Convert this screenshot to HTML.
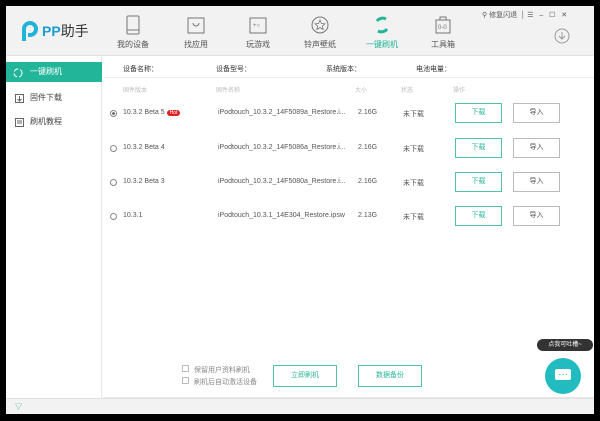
<!DOCTYPE html><html><head><meta charset="utf-8"><style>
*{margin:0;padding:0;box-sizing:border-box}
body{width:600px;height:421px;background:#000;font-family:"Liberation Sans","Noto Sans CJK SC",sans-serif;position:relative;overflow:hidden;font-size:8px;color:#444}
.win{position:absolute;left:6px;top:6px;width:588px;height:408px;background:#fff}
.hd{position:absolute;left:0;top:0;width:588px;height:50px;background:#f2f2f2;border-bottom:1px solid #e2e2e2}
.a{position:absolute;white-space:nowrap}
.nav{position:absolute;top:9px;width:50px;text-align:center;font-size:8px;color:#555}
.nav svg{display:block;margin:0 auto 4px}
.side{position:absolute;left:0;top:50px;width:96px;height:342px;border-right:1px solid #e6e6e6}
.si{position:absolute;left:0;width:96px;height:20px;line-height:20px;padding-left:24px;font-size:8px;color:#444}
.btn{position:absolute;width:47px;height:20px;border:1px solid #bbb;text-align:center;line-height:18px;font-size:7px;color:#555;background:#fff}
.g{border-color:#4cc4ad;color:#2ab59b}
.row{position:absolute;left:0;font-size:7px;color:#555}
.rad{position:absolute;width:7px;height:7px;border:1px solid #888;border-radius:50%}
</style></head><body><div class="win">
<div class="hd">
 <svg class="a" style="left:14px;top:14px" width="20" height="22" viewBox="0 0 20 22"><path d="M4 21V9a6 6 0 1 1 6 6H8" fill="none" stroke="#1fb4d8" stroke-width="4"/></svg>
 <div class="a" style="left:36px;top:15px;font-size:14px;color:#1a9fd0;font-weight:bold">PP<span style="color:#333;font-weight:normal">助手</span></div>
 <div class="nav" style="left:102px"><svg width="14" height="20"><rect x="1" y="1" width="12" height="18" rx="1" fill="none" stroke="#777"/><line x1="1" y1="15" x2="13" y2="15" stroke="#777"/></svg>我的设备</div>
 <div class="nav" style="left:165px"><svg width="18" height="20"><rect x="1" y="3" width="16" height="15" fill="none" stroke="#777"/><path d="M6 8a3 3 0 0 0 6 0" fill="none" stroke="#777"/></svg>找应用</div>
 <div class="nav" style="left:227px"><svg width="18" height="20"><rect x="1" y="3" width="16" height="15" fill="none" stroke="#777"/><text x="4" y="12" font-size="6" fill="#777">+○</text></svg>玩游戏</div>
 <div class="nav" style="left:289px"><svg width="18" height="20"><circle cx="9" cy="10" r="8" fill="none" stroke="#777"/><path d="M9 5l1.5 3.5 3.5.3-2.7 2.3.9 3.4L9 12.6 5.8 14.5l.9-3.4L4 8.8l3.5-.3z" fill="none" stroke="#777" stroke-width=".8"/></svg>铃声壁纸</div>
 <div class="nav" style="left:351px;color:#22b59a"><svg width="18" height="20"><path d="M4 6a7 7 0 0 1 9-2M14 14a7 7 0 0 1-9 2" fill="none" stroke="#22b59a" stroke-width="3"/></svg>一键刷机</div>
 <div class="nav" style="left:412px"><svg width="18" height="20"><rect x="2" y="5" width="14" height="13" fill="none" stroke="#777"/><rect x="6" y="2" width="6" height="3" fill="none" stroke="#777"/><text x="4" y="14" font-size="6" fill="#777">0-0</text></svg>工具箱</div>
 <div class="a" style="left:476px;top:4px;font-size:7px;color:#555">⚲ 修复闪退 &nbsp;│ ☰ &nbsp; – &nbsp; ☐ &nbsp; ✕</div>
 <svg class="a" style="left:548px;top:22px" width="16" height="16"><circle cx="8" cy="8" r="7" fill="none" stroke="#999"/><path d="M8 4v7M5 8l3 3 3-3" fill="none" stroke="#999"/></svg>
</div>
<div class="side">
 <div class="si" style="top:6px;background:#22b59a;color:#fff">一键刷机</div>
 <svg class="a" style="left:7px;top:12px" width="10" height="10"><circle cx="5" cy="5" r="4" fill="none" stroke="#fff" stroke-dasharray="5 2"/></svg>
 <div class="si" style="top:32px">固件下载</div>
 <svg class="a" style="left:9px;top:38px" width="9" height="9"><rect x=".5" y=".5" width="8" height="8" fill="none" stroke="#666"/><path d="M4.5 2v5M2.5 5l2 2 2-2" fill="none" stroke="#666"/></svg>
 <div class="si" style="top:56px">刷机教程</div>
 <svg class="a" style="left:9px;top:62px" width="9" height="9"><rect x=".5" y=".5" width="8" height="8" fill="none" stroke="#666"/><path d="M2 3h5M2 5h5" stroke="#666"/></svg>
</div>
<div class="a" style="left:97px;top:50px;width:491px;height:22px;border-bottom:1px solid #eee;font-size:7px;color:#333">
 <span class="a" style="left:20px;top:8px">设备名称：</span><span class="a" style="left:113px;top:8px">设备型号：</span><span class="a" style="left:223px;top:8px">系统版本：</span><span class="a" style="left:313px;top:8px">电池电量：</span></div>
<div class="a" style="left:97px;top:79px;width:491px;font-size:6px;color:#bbb">
 <span class="a" style="left:20px">固件版本</span><span class="a" style="left:113px">固件名称</span><span class="a" style="left:252px">大小</span><span class="a" style="left:298px">状态</span><span class="a" style="left:350px">操作</span></div>
<div class="a" style="left:97px;top:347px;width:491px;height:45px;border-bottom:1px solid #e6e6e6"></div>
<div class="row" style="top:104px">
 <span class="rad a" style="left:104px;top:0;background:radial-gradient(#666 35%,#fff 45%)"></span>
 <span class="a" style="left:117px;top:-1px">10.3.2 Beta 5 <span style="background:#e02020;color:#fff;border-radius:5px;padding:0 3px;font-size:5px">Hot</span></span>
 <span class="a" style="left:212px;top:-1px">iPodtouch_10.3.2_14F5089a_Restore.i...</span><span class="a" style="left:352px;top:-1px">2.16G</span><span class="a" style="left:397px;top:-1px">未下载</span></div>
<div class="btn g" style="left:449px;top:97px">下载</div><div class="btn" style="left:507px;top:97px">导入</div>
<div class="row" style="top:139px"><span class="rad a" style="left:104px"></span><span class="a" style="left:117px;top:-1px">10.3.2 Beta 4</span><span class="a" style="left:212px;top:-1px">iPodtouch_10.3.2_14F5086a_Restore.i...</span><span class="a" style="left:352px;top:-1px">2.16G</span><span class="a" style="left:397px;top:-1px">未下载</span></div>
<div class="btn g" style="left:449px;top:132px">下载</div><div class="btn" style="left:507px;top:132px">导入</div>
<div class="row" style="top:173px"><span class="rad a" style="left:104px"></span><span class="a" style="left:117px;top:-1px">10.3.2 Beta 3</span><span class="a" style="left:212px;top:-1px">iPodtouch_10.3.2_14F5080a_Restore.i...</span><span class="a" style="left:352px;top:-1px">2.16G</span><span class="a" style="left:397px;top:-1px">未下载</span></div>
<div class="btn g" style="left:449px;top:166px">下载</div><div class="btn" style="left:507px;top:166px">导入</div>
<div class="row" style="top:207px"><span class="rad a" style="left:104px"></span><span class="a" style="left:117px;top:-1px">10.3.1</span><span class="a" style="left:212px;top:-1px">iPodtouch_10.3.1_14E304_Restore.ipsw</span><span class="a" style="left:352px;top:-1px">2.13G</span><span class="a" style="left:397px;top:-1px">未下载</span></div>
<div class="btn g" style="left:449px;top:200px">下载</div><div class="btn" style="left:507px;top:200px">导入</div>
<div class="a" style="left:176px;top:359px;font-size:7px;color:#888;line-height:12px">
 <div><span style="display:inline-block;width:7px;height:7px;border:1px solid #bbb;margin-right:5px"></span>保留用户资料刷机</div>
 <div><span style="display:inline-block;width:7px;height:7px;border:1px solid #bbb;margin-right:5px"></span>刷机后自动激活设备</div></div>
<div class="btn g" style="left:267px;top:359px;width:64px;height:22px;line-height:20px">立即刷机</div>
<div class="btn g" style="left:352px;top:359px;width:64px;height:22px;line-height:20px">数据备份</div>
<div class="a" style="left:531px;top:333px;width:56px;height:12px;background:#333;color:#fff;border-radius:6px;font-size:6px;text-align:center;line-height:12px">点我可吐槽~</div>
<div class="a" style="left:539px;top:352px;width:36px;height:36px;border-radius:50%;background:#22bcc0;text-align:center;color:#fff;font-size:10px;line-height:34px"><span style="background:#fff;color:#22bcc0;padding:0 3px;border-radius:2px">···</span></div>
<div class="a" style="left:0;top:392px;width:588px;height:16px;background:#f2f2f2;border-top:1px solid #e2e2e2;color:#22b59a;font-size:7px;padding:3px 9px">▽</div>
</div></body></html>
